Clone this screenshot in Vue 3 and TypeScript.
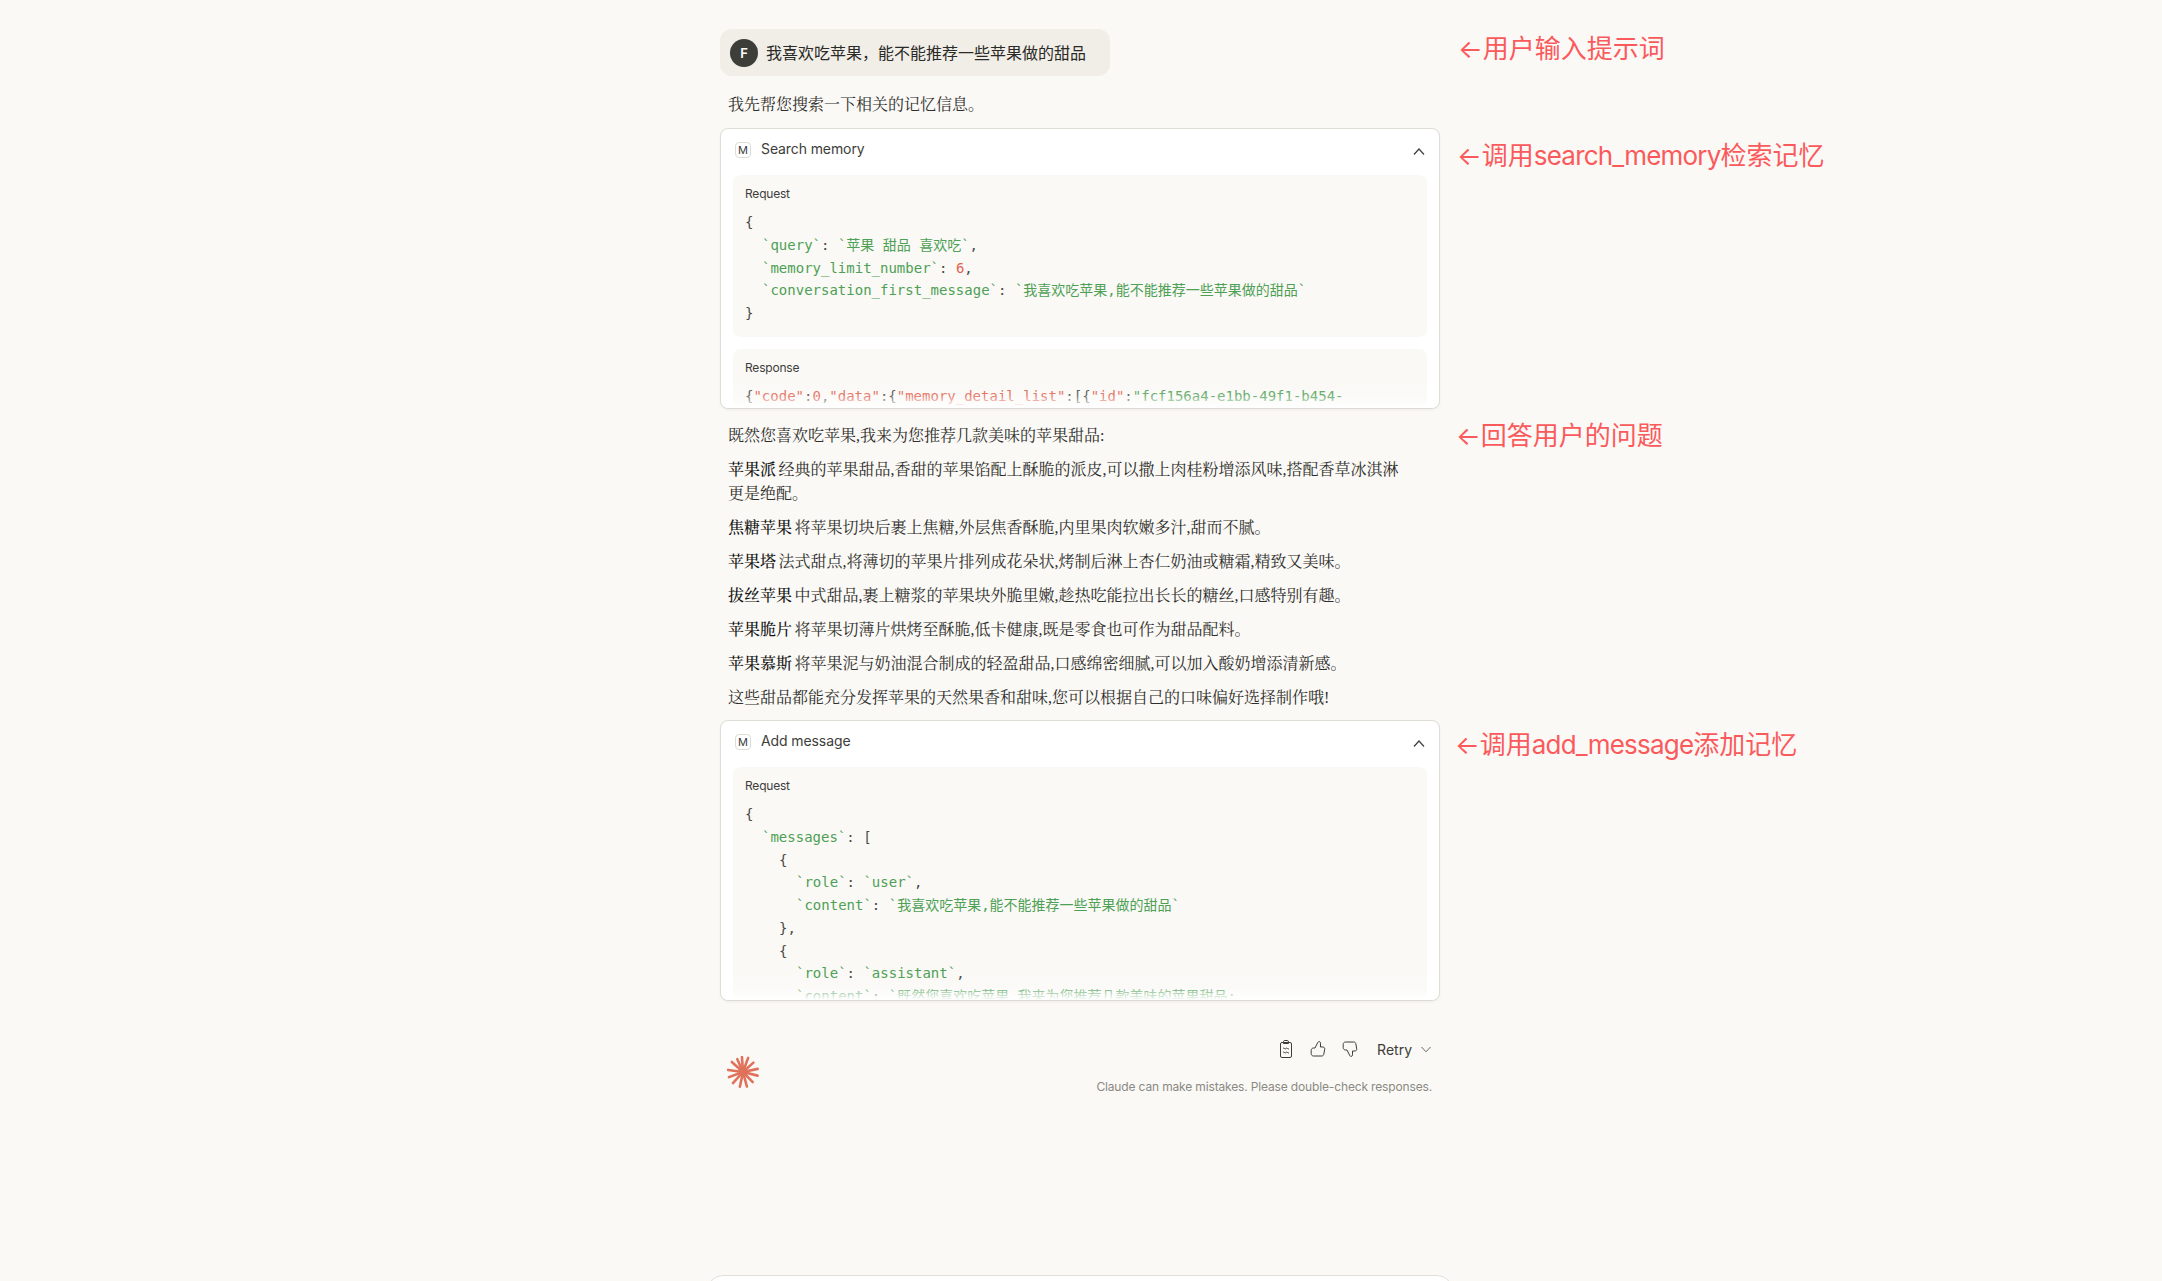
<script setup lang="ts">
type Tok = { t: string; c?: 'g' | 'r' | 'p' }
type Line = { i: number; toks: Tok[] }

const g = (t: string): Tok => ({ t, c: 'g' })
const r = (t: string): Tok => ({ t, c: 'r' })
const p = (t: string): Tok => ({ t })

const searchReq: Line[] = [
  { i: 0, toks: [p('{')] },
  { i: 1, toks: [g('`query`'), p(': '), g('`苹果 甜品 喜欢吃`'), p(',')] },
  { i: 1, toks: [g('`memory_limit_number`'), p(': '), r('6'), p(',')] },
  { i: 1, toks: [g('`conversation_first_message`'), p(': '), g('`我喜欢吃苹果,能不能推荐一些苹果做的甜品`')] },
  { i: 0, toks: [p('}')] }
]
const searchRes: Line[] = [
  {
    i: 0,
    toks: [
      p('{'), r('"code"'), p(':'), r('0'), p(','), r('"data"'), p(':{'),
      r('"memory_detail_list"'), p(':[{'), r('"id"'), p(':'), g('"fcf156a4-e1bb-49f1-b454-')
    ]
  }
]
const addReq: Line[] = [
  { i: 0, toks: [p('{')] },
  { i: 1, toks: [g('`messages`'), p(': [')] },
  { i: 2, toks: [p('{')] },
  { i: 3, toks: [g('`role`'), p(': '), g('`user`'), p(',')] },
  { i: 3, toks: [g('`content`'), p(': '), g('`我喜欢吃苹果,能不能推荐一些苹果做的甜品`')] },
  { i: 2, toks: [p('},')] },
  { i: 2, toks: [p('{')] },
  { i: 3, toks: [g('`role`'), p(': '), g('`assistant`'), p(',')] },
  { i: 3, toks: [g('`content`'), p(': '), g('`既然您喜欢吃苹果,我来为您推荐几款美味的苹果甜品:')] }
]

const answers: { s?: string; t: string }[] = [
  { s: '苹果派', t: ' 经典的苹果甜品,香甜的苹果馅配上酥脆的派皮,可以撒上肉桂粉增添风味,搭配香草冰淇淋更是绝配。' },
  { s: '焦糖苹果', t: ' 将苹果切块后裹上焦糖,外层焦香酥脆,内里果肉软嫩多汁,甜而不腻。' },
  { s: '苹果塔', t: ' 法式甜点,将薄切的苹果片排列成花朵状,烤制后淋上杏仁奶油或糖霜,精致又美味。' },
  { s: '拔丝苹果', t: ' 中式甜品,裹上糖浆的苹果块外脆里嫩,趁热吃能拉出长长的糖丝,口感特别有趣。' },
  { s: '苹果脆片', t: ' 将苹果切薄片烘烤至酥脆,低卡健康,既是零食也可作为甜品配料。' },
  { s: '苹果慕斯', t: ' 将苹果泥与奶油混合制成的轻盈甜品,口感绵密细腻,可以加入酸奶增添清新感。' },
  { t: '这些甜品都能充分发挥苹果的天然果香和甜味,您可以根据自己的口味偏好选择制作哦!' }
]

const rays = [
  [-4, 15], [20, 15], [48, 14], [78, 15], [104, 15], [136, 14],
  [165, 15], [192, 15], [222, 15], [250, 15], [278, 15], [312, 15], [336, 14]
].map(([a, l]) => {
  const rad = (a * Math.PI) / 180
  return { x: 16 + Math.sin(rad) * l, y: 16 - Math.cos(rad) * l }
})
</script>

<template>
  <div class="page">
    <main class="thread">
      <div class="row">
        <div class="bubble">
          <span class="avatar">F</span>
          <span>我喜欢吃苹果，能不能推荐一些苹果做的甜品</span>
        </div>
        <span class="note note-a">←用户输入提示词</span>
      </div>

      <p class="prose intro">我先帮您搜索一下相关的记忆信息。</p>

      <section class="card card-search">
        <header class="card-head">
          <span class="m">M</span>
          <span class="card-title">Search memory</span>
          <svg class="chev" width="14" height="14" viewBox="0 0 14 14"><path d="M2 9.5 7 4l5 5.5" /></svg>
        </header>
        <div class="block">
          <div class="label">Request</div>
          <div class="code">
            <div v-for="(l, n) in searchReq" :key="n" class="cl" :class="'in' + l.i"><span v-for="(k, m) in l.toks" :key="m" :class="k.c">{{ k.t }}</span></div>
          </div>
        </div>
        <div class="block block-clip block-res">
          <div class="label">Response</div>
          <div class="code">
            <div v-for="(l, n) in searchRes" :key="n" class="cl" :class="'in' + l.i"><span v-for="(k, m) in l.toks" :key="m" :class="k.c">{{ k.t }}</span></div>
          </div>
        </div>
        <div class="fade"></div>
        <span class="note note-b">←调用<span class="latin">search_memory</span>检索记忆</span>
      </section>

      <div class="answer">
        <p class="prose">既然您喜欢吃苹果,我来为您推荐几款美味的苹果甜品:</p>
        <p v-for="(a, n) in answers" :key="n" class="prose"><strong v-if="a.s">{{ a.s }}</strong>{{ a.t }}</p>
        <span class="note note-c">←回答用户的问题</span>
      </div>

      <section class="card card-add">
        <header class="card-head">
          <span class="m">M</span>
          <span class="card-title">Add message</span>
          <svg class="chev" width="14" height="14" viewBox="0 0 14 14"><path d="M2 9.5 7 4l5 5.5" /></svg>
        </header>
        <div class="block block-clip block-add">
          <div class="label">Request</div>
          <div class="code">
            <div v-for="(l, n) in addReq" :key="n" class="cl" :class="'in' + l.i"><span v-for="(k, m) in l.toks" :key="m" :class="k.c">{{ k.t }}</span></div>
          </div>
        </div>
        <div class="fade"></div>
        <span class="note note-d">←调用<span class="latin">add_message</span>添加记忆</span>
      </section>

      <footer class="foot">
        <svg class="logo" width="32" height="32" viewBox="0 0 32 32">
          <circle cx="16" cy="16" r="4.5" fill="#e0725c" stroke="none" />
          <line v-for="(e, n) in rays" :key="n" x1="16" y1="16" :x2="e.x" :y2="e.y" />
        </svg>
        <div class="foot-right">
          <div class="actions">
            <svg class="ic" width="16" height="20" viewBox="0 0 16 20">
              <rect x="2.5" y="3.5" width="11" height="15" rx="1.5" />
              <path d="M5.5 3.5V2.8C5.5 2.1 6 1.5 6.8 1.5h2.4c.8 0 1.3.6 1.3 1.3v1.7h-5z" />
              <path d="M5 9.5q.75-1 1.5 0t1.5 0 1.5 0 1.5 0M5 13.5q.75-1 1.5 0t1.5 0 1.5 0 1.5 0" />
            </svg>
            <svg class="ic" width="16" height="18" viewBox="0 0 16 18">
              <path d="M5 8 7.8 2.4C8.5 1 10.5 1.4 10.5 3.2V7h2.4c1.2 0 2 1 1.8 2.1l-.9 5.2c-.2 1.1-1 1.7-2 1.7H3.5C2.2 16 1.2 15 1.2 13.7v-3.4C1.2 9 2.2 8 3.5 8H5z" />
            </svg>
            <svg class="ic flip" width="16" height="18" viewBox="0 0 16 18">
              <path d="M5 8 7.8 2.4C8.5 1 10.5 1.4 10.5 3.2V7h2.4c1.2 0 2 1 1.8 2.1l-.9 5.2c-.2 1.1-1 1.7-2 1.7H3.5C2.2 16 1.2 15 1.2 13.7v-3.4C1.2 9 2.2 8 3.5 8H5z" />
            </svg>
            <span class="retry">Retry</span>
            <svg class="retry-chev" width="12" height="12" viewBox="0 0 12 12"><path d="M1.5 4 6 8.8 10.5 4" /></svg>
          </div>
          <div class="disclaimer">Claude can make mistakes. Please double-check responses.</div>
        </div>
      </footer>
    </main>
    <div class="composer"></div>
  </div>
</template>

<style scoped>
.page {
  height: 1281px;
  overflow: hidden;
  box-sizing: border-box;
  padding: 29px 2px 0 0;
  display: flex;
  flex-direction: column;
  align-items: center;
  background: #faf9f6;
  color: #2f2e2a;
  font-family: Inter, "Noto Sans CJK SC", sans-serif;
}
.thread {
  width: 720px;
  flex: none;
  display: flex;
  flex-direction: column;
}
.row {
  position: relative;
  display: flex;
}
.bubble {
  width: 390px;
  height: 47px;
  box-sizing: border-box;
  padding: 0 10px;
  display: flex;
  align-items: center;
  gap: 8px;
  border-radius: 12px;
  background: #f0eee7;
  font-size: 16px;
  line-height: 24px;
  color: #2b2a27;
}
.avatar {
  width: 28px;
  height: 28px;
  border-radius: 50%;
  background: #3d3d3a;
  color: #fff;
  font-size: 13px;
  font-weight: 600;
  display: flex;
  align-items: center;
  justify-content: center;
}
.prose {
  margin: 0;
  padding: 0 8px;
  font-family: "Liberation Serif", "Noto Serif CJK SC", "Noto Sans CJK SC", serif;
  font-size: 16px;
  line-height: 24px;
  word-spacing: -1.5px;
  color: #2f2e2a;
}
.prose strong {
  font-weight: 500;
  color: #141413;
}
.intro {
  margin-top: 17px;
  margin-bottom: 11px;
}
.answer {
  position: relative;
  margin: 15px 0 10px;
  display: flex;
  flex-direction: column;
  gap: 10px;
  padding-right: 27px;
}
.card {
  position: relative;
  height: 281px;
  box-sizing: border-box;
  background: #fff;
  border: 1px solid #dedcd4;
  border-radius: 8px;
  box-shadow: 0 1px 3px rgba(0, 0, 0, 0.05);
  padding: 0 12px;
}
.card-head {
  height: 46px;
  padding-bottom: 6px;
  box-sizing: border-box;
  display: flex;
  align-items: center;
}
.m {
  width: 16px;
  height: 16px;
  box-sizing: border-box;
  margin-left: 2px;
  border: 1px solid #dedcd4;
  border-radius: 4px;
  background: #fff;
  font-size: 11px;
  line-height: 15px;
  text-align: center;
  color: #3d3d3a;
  position: relative;
  top: 1px;
}
.card-title {
  margin-left: 10px;
  font-size: 14px;
  line-height: 20px;
  letter-spacing: -0.1px;
  color: #3d3d3a;
}
.chev {
  margin-left: auto;
  margin-right: 1px;
  position: relative;
  top: 3px;
  fill: none;
  stroke: #3d3d3a;
  stroke-width: 1.2;
}
.block {
  background: #faf9f6;
  border-radius: 8px;
  padding: 11px 12px 12px;
  margin-bottom: 12px;
}
.block-clip {
  margin-bottom: 0;
  padding-bottom: 0;
  overflow: hidden;
  box-sizing: border-box;
  border-radius: 8px 8px 0 0;
}
.block-res {
  height: 58px;
}
.block-add {
  height: 233px;
}
.label {
  font-size: 12px;
  line-height: 16px;
  letter-spacing: -0.2px;
  margin-bottom: 9px;
  color: #3d3d3a;
}
.cl {
  font-family: "DejaVu Sans Mono", "Noto Sans CJK SC", monospace;
  font-size: 14px;
  line-height: 22.75px;
  height: 22.75px;
  white-space: pre;
  color: #4a4a46;
}
.in1 { padding-left: 17px; }
.in2 { padding-left: 34px; }
.in3 { padding-left: 51px; }
.g { color: #4ea055; }
.r { color: #e2604f; }
.fade {
  position: absolute;
  left: 0;
  right: 0;
  bottom: 0;
  height: 24px;
  border-radius: 0 0 8px 8px;
  background: linear-gradient(to bottom, rgba(255, 255, 255, 0), rgba(255, 255, 255, 0.2) 50%, #fff);
}
.foot {
  display: flex;
  justify-content: space-between;
  margin-top: 34px;
  padding: 0 8px 0 7px;
}
.logo {
  margin-top: 21px;
  stroke: #e0725c;
  stroke-width: 2.6;
  stroke-linecap: round;
}
.foot-right {
  display: flex;
  flex-direction: column;
  align-items: flex-end;
}
.actions {
  height: 28px;
  display: flex;
  align-items: center;
}
.ic {
  fill: none;
  stroke: #3d3d3a;
  stroke-width: 1;
  stroke-linejoin: round;
  margin-right: 16px;
}
.flip {
  transform: rotate(180deg) scaleX(-1);
  margin-right: 19px;
}
.retry {
  font-size: 14px;
  color: #3d3d3a;
}
.retry-chev {
  margin-left: 8px;
  fill: none;
  stroke: #6b6a65;
  stroke-width: 1;
}
.disclaimer {
  margin-top: 16px;
  font-size: 12px;
  line-height: 16px;
  letter-spacing: -0.15px;
  color: #8a8983;
}
.composer {
  flex: none;
  width: 746px;
  height: 60px;
  margin-top: 180px;
  box-sizing: border-box;
  background: #fff;
  border: 1px solid #e2e0d9;
  border-radius: 16px;
}
.note {
  position: absolute;
  left: 100%;
  white-space: nowrap;
  font-family: Inter, "Noto Sans CJK SC", sans-serif;
  font-size: 26px;
  line-height: 34px;
  color: #fb5a5c;
}
.latin {
  letter-spacing: -0.8px;
}
.note-a { margin-left: 18px; top: 3px; }
.note-b { margin-left: 18px; top: 10px; }
.note-c { margin-left: 16px; top: -5px; }
.note-d { margin-left: 16px; top: 7px; }
</style>

<style>
html, body {
  margin: 0;
  background: #faf9f6;
  overflow: hidden;
}
</style>
